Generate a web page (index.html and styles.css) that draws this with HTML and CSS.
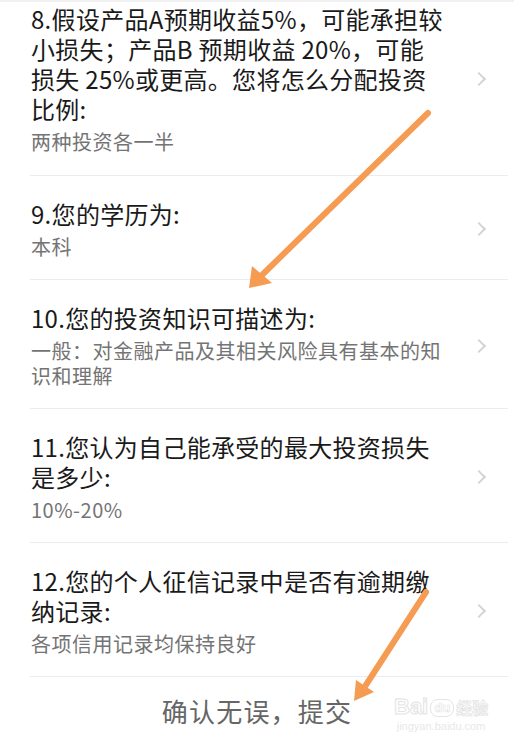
FILE: index.html
```html
<!DOCTYPE html>
<html lang="zh-CN">
<head>
<meta charset="utf-8">
<title>风险测评</title>
<link rel="stylesheet" href="styles.css">
</head>
<body>
<div class="page">
  <div class="topline"></div>
  <ul class="list">
    <li class="item first">
      <div class="texts">
        <div class="q">8.假设产品A预期收益5%，可能承担较<br>小损失；产品B 预期收益 20%，可能<br>损失 25%或更高。您将怎么分配投资<br>比例:</div>
        <div class="a">两种投资各一半</div>
      </div>
      <span class="chev"></span>
    </li>
    <li class="item">
      <div class="texts">
        <div class="q">9.您的学历为:</div>
        <div class="a">本科</div>
      </div>
      <span class="chev"></span>
    </li>
    <li class="item">
      <div class="texts">
        <div class="q">10.您的投资知识可描述为:</div>
        <div class="a">一般：对金融产品及其相关风险具有基本的知<br>识和理解</div>
      </div>
      <span class="chev"></span>
    </li>
    <li class="item">
      <div class="texts">
        <div class="q">11.您认为自己能承受的最大投资损失<br>是多少:</div>
        <div class="a">10%-20%</div>
      </div>
      <span class="chev"></span>
    </li>
    <li class="item">
      <div class="texts">
        <div class="q">12.您的个人征信记录中是否有逾期缴<br>纳记录:</div>
        <div class="a">各项信用记录均保持良好</div>
      </div>
      <span class="chev"></span>
    </li>
  </ul>
  <div class="submit">确认无误，提交</div>

  <div class="watermark">
    <div class="wm-logo">Bai<span class="wm-du">du</span><span class="wm-cn">经验</span></div>
    <div class="wm-url">jingyan.baidu.com</div>
  </div>

  <svg class="arrows" width="514" height="751" viewBox="0 0 514 751">
    <line x1="428" y1="113" x2="262" y2="275" stroke="#f59b52" stroke-width="6" stroke-linecap="round"/>
    <polygon points="249,288 252,266 272,283" fill="#f59b52"/>
    <line x1="426" y1="592" x2="364" y2="688" stroke="#f59b52" stroke-width="6" stroke-linecap="round"/>
    <polygon points="354,701 356,680 374,692" fill="#f59b52"/>
  </svg>
</div>
</body>
</html>
```

FILE: styles.css
```css
* {
  box-sizing: border-box;
}

html, body {
  margin: 0;
  padding: 0;
  background: #ffffff;
}

body {
  font-family: "Noto Sans CJK SC", "Noto Sans", "DejaVu Sans", sans-serif;
}

.page {
  position: relative;
  width: 514px;
  height: 751px;
  overflow: hidden;
  background: #ffffff;
}

.topline {
  height: 2px;
  background: #f1f1f1;
}

.list {
  list-style: none;
  margin: 0;
  padding: 0;
}

.item {
  display: flex;
  align-items: center;
  margin-left: 30px;
  margin-right: 6px;
  padding: 23px 0 20px 1px;
  border-bottom: 1px solid #ececec;
}

.item.first {
  padding-top: 2px;
  padding-bottom: 21px;
}

.texts {
  flex: 1;
  display: flex;
  flex-direction: column;
  gap: 5px;
}

.q {
  font-size: 24px;
  line-height: 30px;
  color: #1a1a1a;
  letter-spacing: 0.3px;
}

.a {
  font-size: 20px;
  line-height: 25px;
  color: #747474;
  letter-spacing: 0.5px;
}

.chev {
  flex: none;
  width: 10px;
  height: 10px;
  margin-right: 24px;
  border-top: 2px solid #d4d4d4;
  border-right: 2px solid #d4d4d4;
  transform: rotate(45deg);
}

.submit {
  text-align: center;
  font-size: 26px;
  line-height: 30px;
  color: #666666;
  padding-top: 19px;
  letter-spacing: 1.2px;
}

.watermark {
  position: absolute;
  left: 394px;
  top: 696px;
  color: #e6e6e6;
  text-align: center;
}

.wm-logo {
  font-family: "Liberation Sans", Arial, sans-serif;
  font-size: 22px;
  font-weight: bold;
  line-height: 22px;
  color: #ffffff;
  -webkit-text-stroke: 1px #e4e4e4;
}

.wm-du {
  display: inline-block;
  font-size: 13px;
  line-height: 16px;
  border: 1px solid #e4e4e4;
  border-radius: 8px;
  padding: 0 3px;
  margin: 0 2px;
  vertical-align: 2px;
  -webkit-text-stroke: 0.6px #e4e4e4;
}

.wm-cn {
  font-family: "Noto Sans CJK SC", sans-serif;
  font-size: 16px;
  -webkit-text-stroke: 0.8px #e4e4e4;
}

.wm-url {
  font-family: "Liberation Sans", Arial, sans-serif;
  font-size: 11px;
  line-height: 16px;
  color: #e8e8e8;
}

.arrows {
  position: absolute;
  left: 0;
  top: 0;
  pointer-events: none;
}
```
